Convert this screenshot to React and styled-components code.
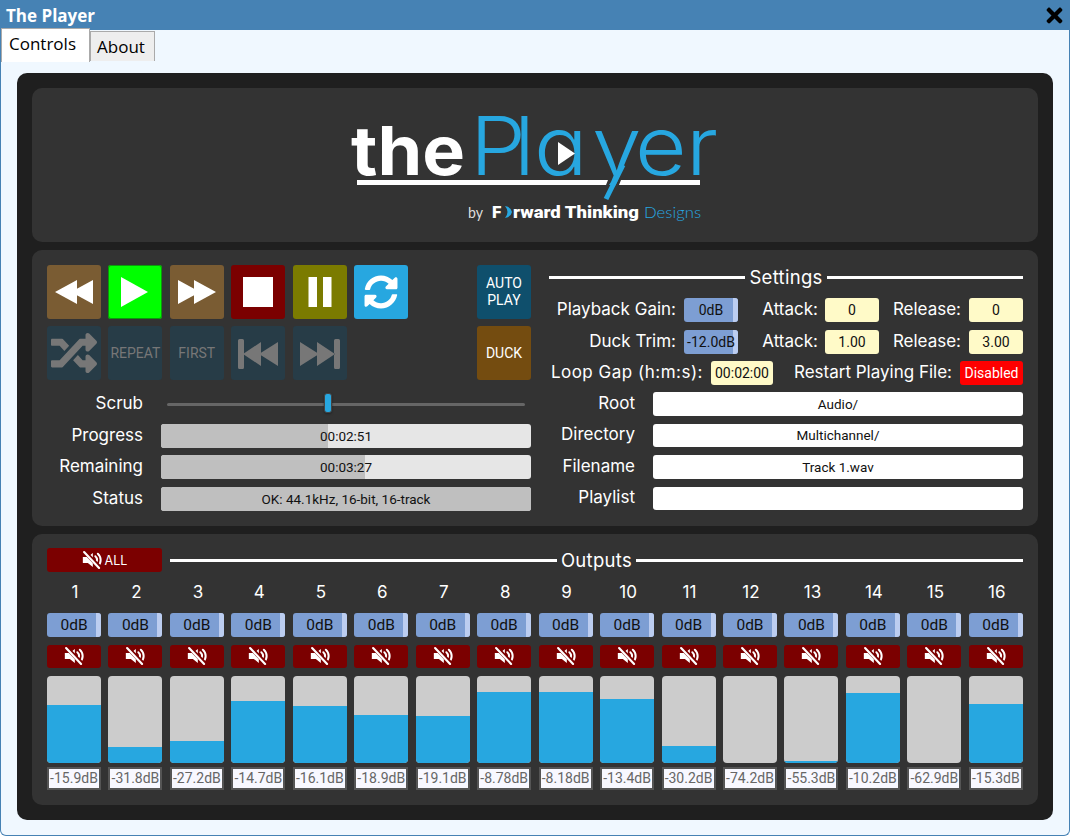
import React from 'react';
import styled, { createGlobalStyle } from 'styled-components';
import { FaSyncAlt, FaRandom, FaTimes } from 'react-icons/fa';

const Global = createGlobalStyle`
  html, body { margin: 0; padding: 0; background: #fff; }
  * { box-sizing: border-box; }
  body { font-family: "Open Sans", "Liberation Sans", sans-serif; }
`;
const Window = styled.div`
  width: 1070px; height: 836px; display: flex; flex-direction: column;
  background: #f0f8ff; border: 1px solid #4682b4; border-top: 0; border-radius: 0 0 6px 6px; overflow: hidden;
`;
const TitleBar = styled.div`
  height: 30px; flex: none; margin: 0 -1px; background: #4682b4; color: #fff; display: flex; align-items: center;
  justify-content: space-between; padding: 1px 4px 0 6px; font-weight: 700; font-size: 17px;
`;
const TabBar = styled.div`display: flex; align-items: flex-end; height: 34px; flex: none; margin-top: -2px;`;
const Tab = styled.div`
  width: ${p => p.$w}px; height: ${p => p.$active ? 34 : 30}px; margin-bottom: ${p => p.$active ? 0 : 1}px;
  padding: 0 0 ${p => p.$active ? 5 : 0}px ${p => p.$active ? 7 : 6}px;
  background: ${p => p.$active ? '#fff' : '#eee'}; border: 1px solid #aaa; border-bottom: 0; color: #000;
  font-size: 17px; display: flex; align-items: center; line-height: 1;
`;
const Main = styled.div`
  margin: 11px 16px 0; height: 747px; background: #1f1f1f; border-radius: 10px; padding: 15px; display: flex; flex-direction: column; gap: 8px;
  font-family: Roboto, "Liberation Sans", sans-serif;
`;
const Panel = styled.section`background: #333; border-radius: 10px; flex: none; height: ${p => p.$h}px;`;
const LogoPanel = styled(Panel)`display: flex; justify-content: center; padding-top: 15px;`;
const MiddlePanel = styled(Panel)`display: flex; padding: 15px; justify-content: space-between;`;
const OutputsPanel = styled(Panel)`padding: 14px 15px;`;
const LeftCol = styled.div`width: 484px; display: flex; flex-direction: column;`;
const ButtonArea = styled.div`display: flex; justify-content: space-between;`;
const Transport = styled.div`display: grid; grid-template-columns: repeat(6, 54px); grid-auto-rows: 54px; gap: 7px 7.4px;`;
const Side = styled.div`display: flex; flex-direction: column; gap: 7px;`;
const Btn = styled.div`
  width: 54px; height: 54px; border-radius: 3px; background: ${p => p.$bg}; color: ${p => p.$fg || '#fff'};
  display: flex; align-items: center; justify-content: center; text-align: center;
  font-size: 14px; line-height: 1.2;
  ${p => p.$ring ? 'box-shadow: inset 0 0 0 1px #0a9a0a;' : ''}
`;
const Rows = styled.div`display: grid; grid-template-columns: 96px 1fr; column-gap: 18px; row-gap: 7.67px; margin-top: 12px; align-items: center;`;
const Label = styled.div`
  color: #fff; font-family: Inter, "Open Sans", sans-serif; font-size: 17px; text-align: right; white-space: nowrap; line-height: 1;
  padding-bottom: 1px; letter-spacing: ${p => p.$ls || 0}px;
`;
const Slider = styled.div`height: 24px; position: relative; margin: 0 6px; display: flex; align-items: center;`;
const Track = styled.div`height: 3px; width: 100%; background: #666; border-radius: 2px;`;
const Thumb = styled.div`
  position: absolute; left: 157px; top: 1px; width: 8px; height: 20px; border-radius: 3px; background: #27a7e0; border: 1px solid #444; box-shadow: 0 1px 2px #222;
`;
const Bar = styled.div`
  height: 24px; border-radius: 3px; background: #e6e6e6; position: relative; overflow: hidden;
  display: flex; align-items: center; justify-content: center; font-size: 13.5px; color: #111;
`;
const BarFill = styled.div`position: absolute; left: 0; top: 0; bottom: 0; background: #bfbfbf;`;
const BarText = styled.span`position: relative;`;
const RightCol = styled.div`width: 474px; display: flex; flex-direction: column; margin-left: 18px;`;
const Heading = styled.div`
  display: flex; align-items: center; gap: 4px; height: 22px;
  color: #fff; font-family: Inter, sans-serif; font-size: 18.5px; letter-spacing: 0.3px; flex: 1;
`;
const SettingsHeading = styled(Heading)`flex: none; margin: 1px 0 10px;`;
const Rule = styled.div`flex: 1; height: 3px; background: #fff;`;
const SettingRow = styled.div`display: flex; align-items: center; height: 24px; margin-top: 7.5px;`;
const FirstRow = styled(SettingRow)`margin-top: 0;`;
const Fixed = styled(Label)`width: ${p => p.$w}px; flex: none;`;
const Gain = styled.div`
  width: 54px; height: 24px; flex: none; margin-left: ${p => p.$ml || 0}px; border-radius: 3px; background: #7d9ed3; position: relative; overflow: hidden;
  display: flex; align-items: center; justify-content: center; color: #111; font-size: ${p => p.$fs || 14}px;
  &::after { content: ''; position: absolute; right: 0; top: 0; bottom: 0; width: 5px; background: #bccdf0; }
`;
const GainText = styled.span`position: relative; z-index: 1;`;
const Input = styled.div`
  width: ${p => p.$w || 54}px; height: 24px; flex: none; margin-left: ${p => p.$ml || 0}px; background: #fffac8; border-radius: 3px; color: #111;
  display: flex; align-items: center; justify-content: center; font-size: 14px;
`;
const Disabled = styled.div`
  width: 63px; height: 24px; margin-left: 8px; flex: none; border-radius: 3px; background: #f00; color: #fff; font-size: 14px; display: flex; align-items: center; justify-content: center;
`;
const PathRows = styled(Rows)`grid-template-columns: 86px 1fr; margin-top: 7px; row-gap: 8px;`;
const TextField = styled.div`
  height: 23.5px; background: #fff; border-radius: 3px; color: #111; font-size: 13.5px; display: flex; align-items: center; justify-content: center;
`;
const OutputsHead = styled.div`display: flex; align-items: center; gap: 8px;`;
const AllBtn = styled.div`
  width: 115px; height: 24px; background: #7b0000; border-radius: 3px; color: #fff; font-size: 12.5px; font-family: Inter, sans-serif;
  display: flex; align-items: center; justify-content: center; gap: 3px;
`;
const Channels = styled.div`display: flex; justify-content: space-between; margin-top: 7px;`;
const Channel = styled.div`width: 54px; display: flex; flex-direction: column; align-items: stretch;`;
const Num = styled.div`height: 34px; padding-left: 2px; color: #fff; font-family: Inter, sans-serif; font-size: 17px; text-align: center; line-height: 27px;`;
const Mute = styled.div`height: 23.5px; margin-top: 7.5px; background: #7b0000; border-radius: 3px; display: flex; align-items: center; justify-content: center;`;
const Meter = styled.div`height: 87px; margin-top: 8px; border-radius: 4px; background: #ccc; position: relative; overflow: hidden;`;
const MeterFill = styled.div`position: absolute; left: 0; right: 0; bottom: 0; background: #27a7e0;`;
const Readout = styled.div`
  height: 23px; margin-top: 3.5px; background: #f8f8ff; border: 2px solid #555; color: #666; font-size: 14px; display: flex; align-items: center; justify-content: center; white-space: nowrap;
`;
const LogoWord = styled.text`font-family: Inter, sans-serif; font-weight: 300; font-size: 81px; font-feature-settings: "cv11" 1;`;

const Glyph = ({ d, fill = '#fff' }) => (
  <svg width="54" height="54" viewBox="0 0 54 54"><path d={d} fill={fill} /></svg>
);
const REWIND = 'M8 27L30 15V39zM24 27L46 15V39z';
const FORWARD = 'M8 15L30 27L8 39zM24 15L46 27L24 39z';
const PLAY = 'M13 12L40 27L13 42z';
const STOP = 'M12 12H42V42H12z';
const PAUSE = 'M15.5 12H24V42H15.5zM30 12H38.5V42H30z';
const PREV = 'M7 14.5a1.5 1.5 0 0 1 1.5-1.5h3a1.5 1.5 0 0 1 1.5 1.5v27a1.5 1.5 0 0 1-1.5 1.5h-3a1.5 1.5 0 0 1-1.5-1.5zM12 28L30 16V40zM28 28L47 16V40z';
const NEXT = 'M41 14.5a1.5 1.5 0 0 1 1.5-1.5h3a1.5 1.5 0 0 1 1.5 1.5v27a1.5 1.5 0 0 1-1.5 1.5h-3a1.5 1.5 0 0 1-1.5-1.5zM42 28L24 16V40zM26 28L7 16V40z';

const MuteIcon = ({ size = 20 }) => (
  <svg width={size} height={size} viewBox="0 0 24 24" fill="none">
    <path d="M1 8.5h6L13 3.5v17L7 15.5H1z" fill="#fff" />
    <path d="M16 7.5a6 6 0 0 1 0 9M19 4.5a10 10 0 0 1 0 15" stroke="#fff" strokeWidth="2.4" strokeLinecap="round" />
    <path d="M3.5 2.5L21.5 21" stroke="#7b0000" strokeWidth="5" />
    <path d="M2.5 2.5L20.5 21.5" stroke="#fff" strokeWidth="2.6" strokeLinecap="round" />
  </svg>
);

const wordX = [470, 514, 534, 592, 635, 686].map(x => (x / 1.1).toFixed(1)).join(' ');
const Logo = () => (
  <svg width="380" height="130" viewBox="345 103 380 130">
    <text x="351" y="175" fill="#fff" fontFamily="Inter, sans-serif" fontWeight="700" fontSize="68" textLength="114" lengthAdjust="spacingAndGlyphs">the</text>
    <LogoWord x={wordX} y="175" fill="#27a7e0" transform="scale(1.1 1)">Player</LogoWord>
    <path d="M585 185H612L604 206H585z" fill="#333" />
    <path d="M558 142L575 153.5L558 165z" fill="#fff" />
    <path d="M357 180H608L606 185H357zM621 180H700V185H619z" fill="#fff" />
    <path d="M606 199L623 165" stroke="#27a7e0" strokeWidth="5" />
    <text x="468" y="218" fill="#ddd" fontFamily="Lato, sans-serif" fontSize="15" textLength="15" lengthAdjust="spacingAndGlyphs">by</text>
    <text x="492" y="218" fill="#fff" fontFamily="Roboto, sans-serif" fontWeight="900" fontSize="17">F</text>
    <path d="M505 206q5 6 0 12q6-1 7-6q-1-5-7-6z" fill="#27a7e0" />
    <text x="513" y="218" fill="#fff" fontFamily="Roboto, sans-serif" fontWeight="900" fontSize="17" textLength="126" lengthAdjust="spacingAndGlyphs">rward Thinking</text>
    <text x="644" y="218" fill="#27a7e0" fontFamily="Lato, sans-serif" fontWeight="300" fontSize="16" textLength="57" lengthAdjust="spacingAndGlyphs">Designs</text>
  </svg>
);

const channels = [
  ['-15.9dB', 58], ['-31.8dB', 16], ['-27.2dB', 22], ['-14.7dB', 62], ['-16.1dB', 57], ['-18.9dB', 48],
  ['-19.1dB', 47], ['-8.78dB', 71], ['-8.18dB', 71], ['-13.4dB', 64], ['-30.2dB', 17], ['-74.2dB', 0],
  ['-55.3dB', 2], ['-10.2dB', 70], ['-62.9dB', 0], ['-15.3dB', 59],
];

export default function App() {
  return (
    <>
      <Global />
      <Window>
        <TitleBar>The Player<FaTimes color="#000" size={23} /></TitleBar>
        <TabBar>
          <Tab $active $w={89}>Controls</Tab>
          <Tab $w={65}>About</Tab>
        </TabBar>
        <Main>
          <LogoPanel $h={154}><Logo /></LogoPanel>
          <MiddlePanel $h={276}>
            <LeftCol>
              <ButtonArea>
                <Transport>
                  <Btn $bg="#7a5c33"><Glyph d={REWIND} /></Btn>
                  <Btn $bg="#0f0" $ring><Glyph d={PLAY} /></Btn>
                  <Btn $bg="#7a5c33"><Glyph d={FORWARD} /></Btn>
                  <Btn $bg="#7b0000"><Glyph d={STOP} /></Btn>
                  <Btn $bg="#7b7b00"><Glyph d={PAUSE} /></Btn>
                  <Btn $bg="#27a7e0"><FaSyncAlt size={34} /></Btn>
                  <Btn $bg="#273c47" $fg="#777"><FaRandom size={46} /></Btn>
                  <Btn $bg="#273c47" $fg="#777">REPEAT</Btn>
                  <Btn $bg="#273c47" $fg="#777">FIRST</Btn>
                  <Btn $bg="#273c47"><Glyph d={PREV} fill="#777" /></Btn>
                  <Btn $bg="#273c47"><Glyph d={NEXT} fill="#777" /></Btn>
                </Transport>
                <Side>
                  <Btn $bg="#0f4f6c">AUTO<br />PLAY</Btn>
                  <Btn $bg="#744c10">DUCK</Btn>
                </Side>
              </ButtonArea>
              <Rows>
                <Label>Scrub</Label>
                <Slider><Track /><Thumb /></Slider>
                <Label>Progress</Label>
                <Bar><BarFill style={{ width: '45%' }} /><BarText>00:02:51</BarText></Bar>
                <Label>Remaining</Label>
                <Bar><BarFill style={{ width: '55%' }} /><BarText>00:03:27</BarText></Bar>
                <Label>Status</Label>
                <Bar><BarFill style={{ width: '100%' }} /><BarText>OK: 44.1kHz, 16-bit, 16-track</BarText></Bar>
              </Rows>
            </LeftCol>
            <RightCol>
              <SettingsHeading><Rule />Settings<Rule /></SettingsHeading>
              <FirstRow>
                <Fixed $w={127}>Playback Gain:</Fixed><Gain $ml={8}><GainText>0dB</GainText></Gain>
                <Fixed $w={80}>Attack:</Fixed><Input $ml={7}>0</Input>
                <Fixed $w={82}>Release:</Fixed><Input $ml={8}>0</Input>
              </FirstRow>
              <SettingRow>
                <Fixed $w={127}>Duck Trim:</Fixed><Gain $ml={8}><GainText>-12.0dB</GainText></Gain>
                <Fixed $w={80}>Attack:</Fixed><Input $ml={7}>1.00</Input>
                <Fixed $w={82}>Release:</Fixed><Input $ml={8}>3.00</Input>
              </SettingRow>
              <SettingRow>
                <Fixed $w={154} $ls={0.5}>Loop Gap (h:m:s):</Fixed><Input $w={62} $ml={8}>00:02:00</Input>
                <Fixed $w={179}>Restart Playing File:</Fixed><Disabled>Disabled</Disabled>
              </SettingRow>
              <PathRows>
                <Label>Root</Label><TextField>Audio/</TextField>
                <Label>Directory</Label><TextField>Multichannel/</TextField>
                <Label>Filename</Label><TextField>Track 1.wav</TextField>
                <Label>Playlist</Label><TextField />
              </PathRows>
            </RightCol>
          </MiddlePanel>
          <OutputsPanel $h={271}>
            <OutputsHead>
              <AllBtn><MuteIcon size={20} />ALL</AllBtn>
              <Heading><Rule />Outputs<Rule /></Heading>
            </OutputsHead>
            <Channels>
              {channels.map(([db, px], i) => (
                <Channel key={i}>
                  <Num>{i + 1}</Num>
                  <Gain $fs={15.5}><GainText>0dB</GainText></Gain>
                  <Mute><MuteIcon size={20} /></Mute>
                  <Meter><MeterFill style={{ height: `${px}px` }} /></Meter>
                  <Readout>{db}</Readout>
                </Channel>
              ))}
            </Channels>
          </OutputsPanel>
        </Main>
      </Window>
    </>
  );
}
